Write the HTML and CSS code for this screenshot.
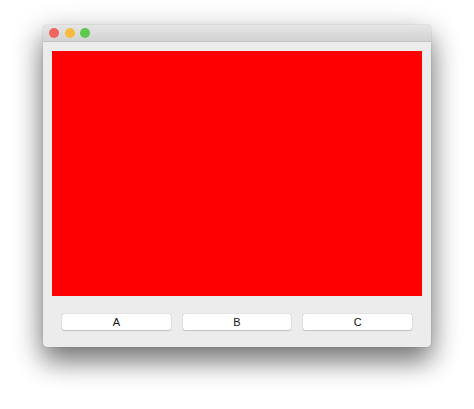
FILE: index.html
```html
<!DOCTYPE html>
<html lang="en">
<head>
  <meta charset="UTF-8">
  <title>Window</title>
  <link rel="stylesheet" href="styles.css">
</head>
<body>

  <div class="window">
    <div class="titlebar">
      <span class="light close"></span>
      <span class="light minimize"></span>
      <span class="light zoom"></span>
    </div>
    <div class="content">
      <div class="canvas"></div>
      <div class="buttons">
        <button>A</button>
        <button>B</button>
        <button>C</button>
      </div>
    </div>
  </div>

</body>
</html>
```

FILE: styles.css
```css
html, body {
  height: 100%;
}

body {
  margin: 0;
  padding: 25px 43px 0;
  box-sizing: border-box;
  background-color: white;
  font-family: "Liberation Sans", Arial, sans-serif;
  overflow: hidden;
}

.window {
  width: 388px;
  height: 322px;
  display: flex;
  flex-direction: column;
  background-color: #ececec;
  border-radius: 4px;
  box-shadow: 0 0 1px rgba(0, 0, 0, 0.45), 0 14px 26px rgba(0, 0, 0, 0.45), 0 8px 34px rgba(0, 0, 0, 0.2);
}

.titlebar {
  height: 16px;
  display: flex;
  align-items: center;
  gap: 5.5px;
  padding-left: 6px;
  background: linear-gradient(#e6e6e6, #d2d2d2);
  border-bottom: 1px solid #c4c4c4;
  border-radius: 4px 4px 0 0;
}

.light {
  width: 10px;
  height: 10px;
  border-radius: 50%;
}

.close {
  background-color: #f0655d;
}

.minimize {
  background-color: #f7bc3f;
}

.zoom {
  background-color: #5fc94f;
}

.content {
  flex: 1;
  display: flex;
  flex-direction: column;
  padding: 9px 9px 17px;
}

.canvas {
  flex: 1;
  background-color: #ff0000;
}

.buttons {
  display: flex;
  gap: 12px;
  margin: 18px 10px 0;
}

button {
  flex: 1;
  height: 16px;
  padding: 0;
  background-color: white;
  color: #111;
  font-family: inherit;
  font-size: 11px;
  border: none;
  border-radius: 2px;
  box-shadow: 0 0 1px rgba(0, 0, 0, 0.4), 0 1px 1px rgba(0, 0, 0, 0.15);
}
```
